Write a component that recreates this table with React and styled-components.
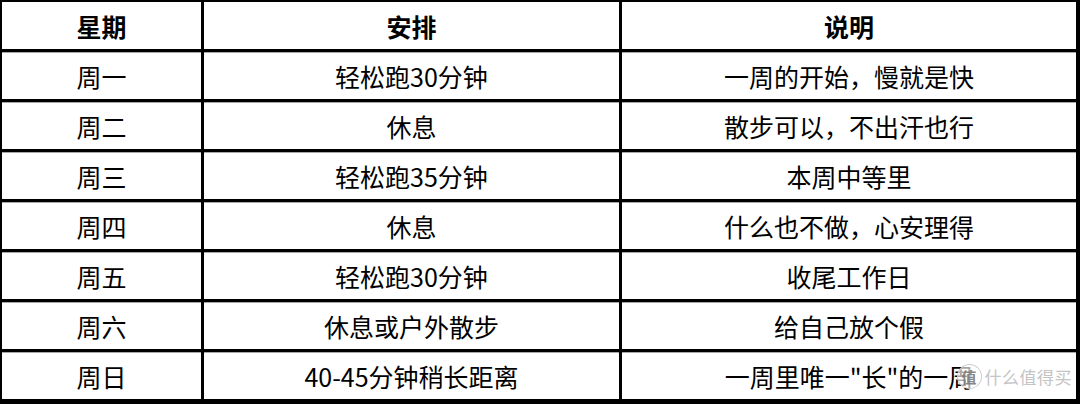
import React from "react";
import styled, { createGlobalStyle } from "styled-components";

const rows = [
  ["周一", "轻松跑30分钟", "一周的开始，慢就是快"],
  ["周二", "休息", "散步可以，不出汗也行"],
  ["周三", "轻松跑35分钟", "本周中等里"],
  ["周四", "休息", "什么也不做，心安理得"],
  ["周五", "轻松跑30分钟", "收尾工作日"],
  ["周六", "休息或户外散步", "给自己放个假"],
  ["周日", "40-45分钟稍长距离", "一周里唯一\"长\"的一周"],
];

const App = () => {
  return (
    <>
      <GlobalStyle />
      <Wrapper>
        <Table>
          <HeadCell>星期</HeadCell>
          <HeadCell>安排</HeadCell>
          <HeadCell>说明</HeadCell>
          {rows.map((row) =>
            row.map((text, i) => <Cell key={row[0] + i}>{text}</Cell>)
          )}
        </Table>
        <Watermark>
          <Badge>值</Badge>
          <BrandText>什么值得买</BrandText>
        </Watermark>
      </Wrapper>
    </>
  );
};

export default App;

const GlobalStyle = createGlobalStyle`
  body {
    margin: 0;
    background: #fff;
    font-family: "Noto Sans CJK SC", "Noto Sans", sans-serif;
  }
`;

const Wrapper = styled.div`
  position: relative;
  width: 1080px;
  height: 404px;
  overflow: hidden;
`;

const Table = styled.div`
  display: grid;
  grid-template-columns: 199px 415px 454px;
  grid-auto-rows: 47px;
  gap: 3px;
  padding: 2px 4px 5px 2px;
  background: #000;
  width: 1080px;
  box-sizing: border-box;
`;

const Cell = styled.div`
  background: #fff;
  display: flex;
  align-items: center;
  justify-content: center;
  font-size: 25px;
  color: #000;
  box-shadow: inset 0 1px 0 #a8a8a8;
  white-space: nowrap;
  padding-top: 1px;
`;

const HeadCell = styled(Cell)`
  font-weight: 700;
  box-shadow: none;
  padding-top: 0;
`;

const Watermark = styled.div`
  position: absolute;
  right: 8px;
  bottom: 15px;
  display: flex;
  align-items: center;
  gap: 3px;
`;

const Badge = styled.div`
  width: 25px;
  height: 25px;
  border-radius: 50%;
  border: 1.5px solid rgba(200, 200, 200, 0.9);
  background: rgba(255, 255, 255, 0.65);
  display: flex;
  align-items: center;
  justify-content: center;
  font-size: 15px;
  font-weight: 700;
  color: rgba(120, 120, 120, 0.9);
  box-sizing: border-box;
`;

const BrandText = styled.span`
  font-size: 17px;
  color: #c4c4c4;
  letter-spacing: 0.5px;
  text-shadow: 0 0 1px rgba(255, 255, 255, 0.8);
`;
